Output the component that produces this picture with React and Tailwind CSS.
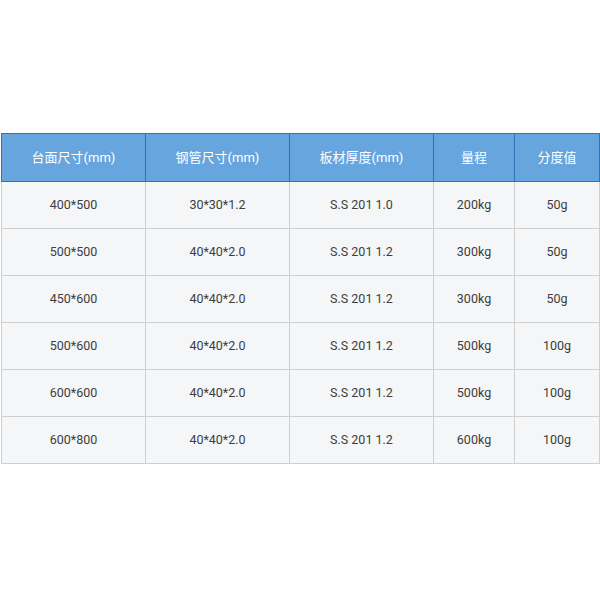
export default function App() {
  const head = ["台面尺寸(mm)", "钢管尺寸(mm)", "板材厚度(mm)", "量程", "分度值"];
  const rows = [
    ["400*500", "30*30*1.2", "S.S 201 1.0", "200kg", "50g"],
    ["500*500", "40*40*2.0", "S.S 201 1.2", "300kg", "50g"],
    ["450*600", "40*40*2.0", "S.S 201 1.2", "300kg", "50g"],
    ["500*600", "40*40*2.0", "S.S 201 1.2", "500kg", "100g"],
    ["600*600", "40*40*2.0", "S.S 201 1.2", "500kg", "100g"],
    ["600*800", "40*40*2.0", "S.S 201 1.2", "600kg", "100g"],
  ];
  const widths = ["w-[144px]", "w-[144px]", "w-[144px]", "w-[81px]", "w-[85px]"];
  return (
    <div className="w-[600px] h-[600px] bg-white pt-[133px] pl-[1px]" style={{ fontFamily: 'Roboto, "Noto Sans CJK SC", sans-serif' }}>
      <table className="border-collapse table-fixed w-[598px]">
        <colgroup>
          {widths.map((w, i) => (
            <col key={i} className={w} />
          ))}
        </colgroup>
        <thead>
          <tr className="h-[48px] bg-[#67a5de]">
            {head.map((h, i) => (
              <th key={i} className="border border-[#2f73b7] text-white font-normal text-[13px] text-center">
                {h}
              </th>
            ))}
          </tr>
        </thead>
        <tbody>
          {rows.map((r, i) => (
            <tr key={i} className="h-[47px] bg-[#f5f6f8]">
              {r.map((c, j) => (
                <td key={j} className="border border-[#cfcfcf] text-[#3d3d3d] text-[12.5px] text-center">
                  {c}
                </td>
              ))}
            </tr>
          ))}
        </tbody>
      </table>
    </div>
  );
}
